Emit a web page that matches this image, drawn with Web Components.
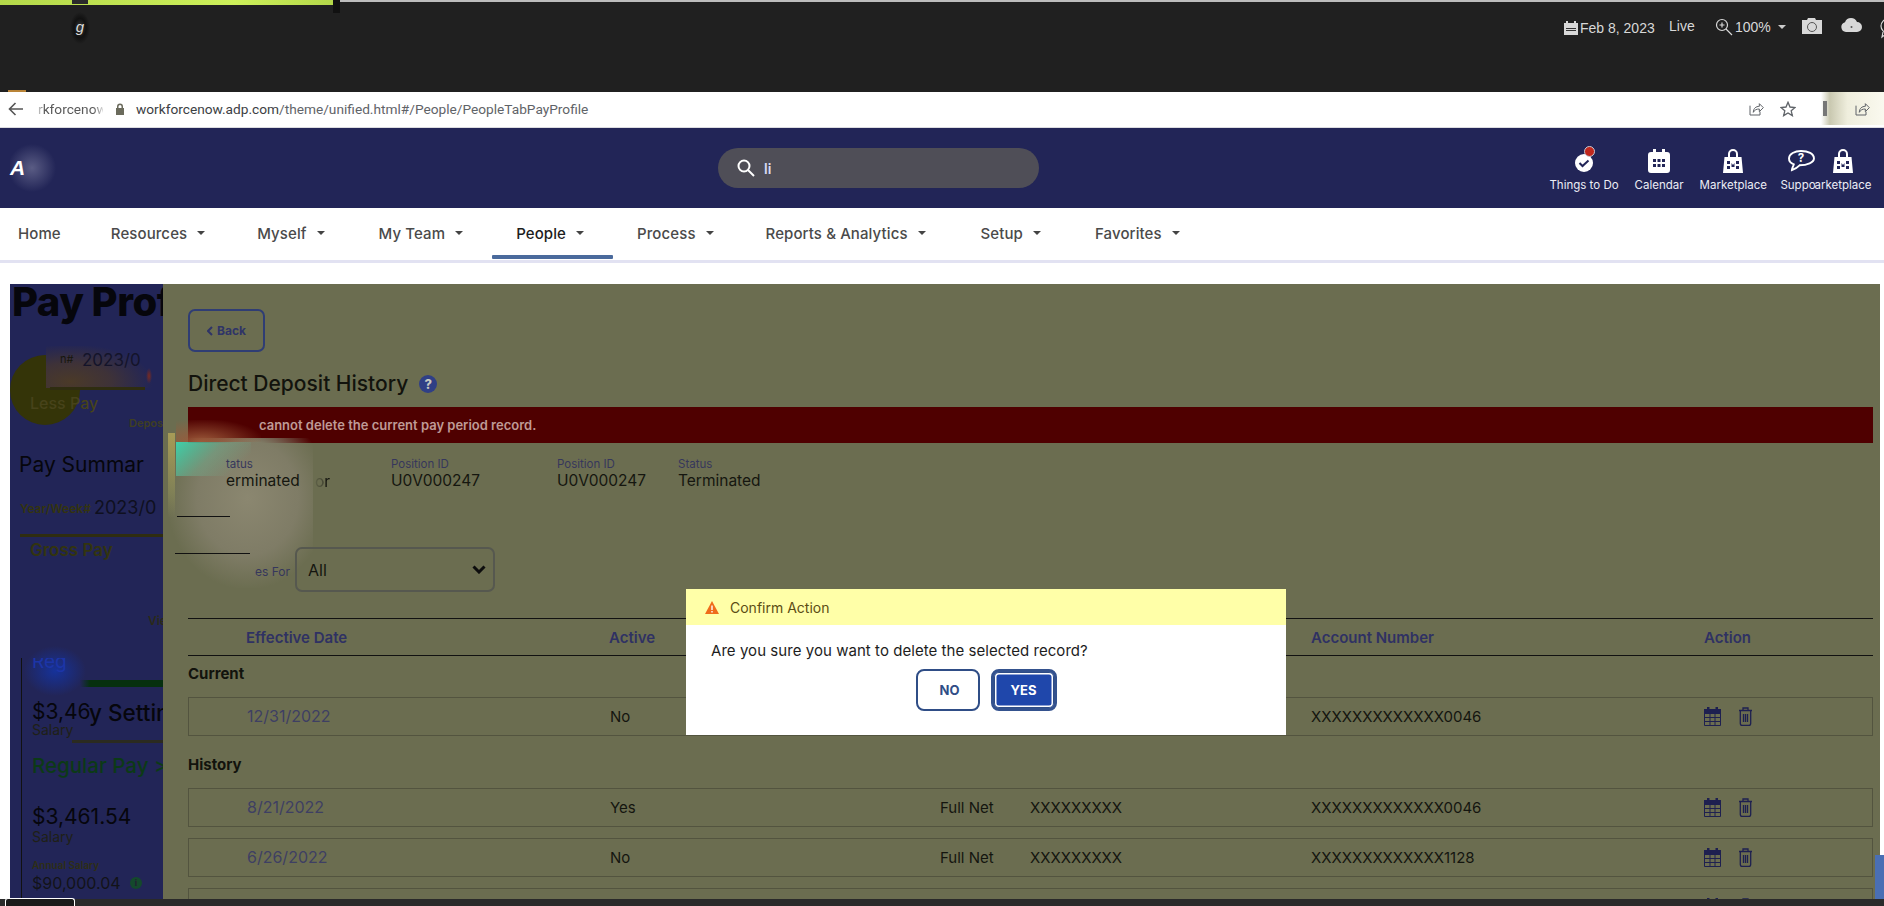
<!DOCTYPE html>
<html>
<head>
<meta charset="utf-8">
<style>
html,body{margin:0;padding:0;background:#fff}
body{width:1884px;height:906px;overflow:hidden;display:flex;flex-direction:column;font-family:Inter,"Liberation Sans",sans-serif}
</style>
</head>
<body>
<top-strip></top-strip>
<address-bar></address-bar>
<app-header></app-header>
<main-nav></main-nav>
<work-area></work-area>
<bottom-strip></bottom-strip>
<confirm-modal></confirm-modal>

<script>
// icono reutilizable, todos los trazos viven aqui
const ICONS = {
  calendar: '<svg viewBox="0 0 22 24" width="100%" height="100%"><path fill="currentColor" fill-rule="evenodd" d="M3 3h2V0h3v3h6V0h3v3h2a3 3 0 0 1 3 3v15a3 3 0 0 1-3 3H3a3 3 0 0 1-3-3V6a3 3 0 0 1 3-3zM5 10v3h3v-3zm4.500 0v3h3v-3zm4.500 0v3h3v-3zM5 15v3h3v-3zm4.500 0v3h3v-3zm4.500 0v3h3v-3z"/></svg>',
  bag: '<svg viewBox="0 0 20 24" width="100%" height="100%"><path fill="currentColor" fill-rule="evenodd" d="M1.500 8H5V5a5 5 0 0 1 10 0v3h3.500L20 24H0zM7 8h6V5a3 3 0 0 0-6 0zM4 12v3h3v-3zm9 0v3h3v-3zM4 17v3h3v-3zm9 0v3h3v-3zM8.500 14l1.500 2 1.500-2v4h-3z"/></svg>',
  share: '<svg viewBox="0 0 24 24" width="100%" height="100%" fill="none" stroke="currentColor" stroke-width="1.500"><path d="M3 7v14h15v-5"/><path d="M8 17c0-6 4-9 9-9V4l6 6-6 6v-4c-4 0-7 1-9 5z"/></svg>'
};

class TopStrip extends HTMLElement {
  constructor(){
    super();
    this.attachShadow({mode:'open'});
    this.shadowRoot.innerHTML = `
    <style>
      :host{display:flex;flex:0 0 92px;height:92px;background:#202020;position:relative;color:#d8d8d8;font:14px "Liberation Sans",sans-serif;overflow:hidden}
      .line{position:absolute;left:0;right:0;top:0;height:2px;background:#bdbdbd}
      .lime{position:absolute;left:0;top:0;width:334px;height:5px;background:linear-gradient(90deg,#b4d84a,#cdf05a 70%,#b4d84a)}
      .cut{position:absolute;left:72px;top:0;width:16px;height:4px;background:#2b2b2b}
      .smudge{position:absolute;left:70px;top:12px;width:20px;height:32px;text-align:center;line-height:30px;color:#ddd;font-size:15px;font-style:italic;background:radial-gradient(closest-side,#3a3a3a,#111 60%,transparent)}
      .tick{position:absolute;left:8px;top:90px;width:18px;height:2px;background:#b98438}
      .notch{position:absolute;left:333px;top:0;width:7px;height:13px;background:#111}
      .tools{margin-left:auto;display:flex;align-items:flex-start;padding:18px 0 0 0;width:320px;box-sizing:border-box;position:relative;white-space:nowrap}
      .date{display:flex;align-items:center;gap:2px;width:105px;margin-top:2px}
      .live{width:46px;margin-top:0}
      .zoom{display:flex;align-items:center;gap:2px;width:87px}
      .caret{width:0;height:0;border:4px solid transparent;border-top-color:#ccc;border-bottom:0;margin-left:5px}
      svg{display:block;flex:none}
      .tools svg.ic{margin-right:19px}
    </style>
    <div class="line"></div><div class="lime"></div><div class="cut"></div><div class="notch"></div>
    <div class="smudge">g</div><div class="tick"></div>
    <div class="tools">
      <div class="date"><svg width="14" height="14" viewBox="0 0 14 14"><path fill="#d8d8d8" d="M0 2h2V0h2v2h6V0h2v2h2v12H0z"/><path fill="#333" d="M2 7h10v1H2zm0 2h10v1H2z"/></svg><span>Feb 8, 2023</span></div>
      <div class="live">Live</div>
      <div class="zoom"><svg width="18" height="18" viewBox="0 0 18 18" fill="none" stroke="#d8d8d8" stroke-width="1.200"><circle cx="7" cy="7" r="5.500"/><path d="M11 11l6 6M7 4.500v5M4.500 7h5"/></svg><span>100%</span><i class="caret"></i></div>
      <svg class="ic" width="20" height="16" viewBox="0 0 20 16"><path fill="#d8d8d8" d="M0 2h5l1-2h7l1 2h6v14H0z"/><circle cx="10" cy="9" r="4.500" fill="none" stroke="#555" stroke-width="1"/></svg>
      <svg class="ic" width="21" height="14" viewBox="0 0 21 14" style="margin-right:18px"><path fill="#d8d8d8" d="M5 14a5 5 0 0 1-1-9.800A6.500 6.500 0 0 1 16 4a5 5 0 0 1 0 10z"/><circle cx="10.500" cy="9" r="1" fill="#555"/></svg>
      <svg width="4" height="22" viewBox="0 0 4 22" fill="none" stroke="#d8d8d8" stroke-width="1.200"><circle cx="8" cy="8" r="7"/><path d="M3 14l-1 5 4-3"/></svg>
    </div>`;
  }
}

class AddressBar extends HTMLElement {
  constructor(){
    super();
    this.attachShadow({mode:'open'});
    this.shadowRoot.innerHTML = `
    <style>
      :host{display:flex;align-items:center;flex:0 0 36px;height:36px;box-sizing:border-box;padding-bottom:2px;background:#fff;border-bottom:1px solid #dcdce0;color:#5f6368;font:13.700px Roboto,sans-serif;position:relative}
      .back{width:15px;height:14px;margin-left:8px;color:#555}
      .tab{width:65px;margin-left:15px;color:#5a5a5a;white-space:nowrap;overflow:hidden;-webkit-mask-image:linear-gradient(90deg,#0004 0,#000 10%,#000 85%,#0003 100%)}
      .lock{margin-left:12px;margin-right:11px}
      .url b{font-weight:400;color:#3c4043}
      .right{margin-left:auto;display:flex;align-items:center;color:#5f6368}
      .s{width:16px;height:16px;display:block}
      .star{margin-left:16px;width:16px;height:16px}
      .tail{display:flex;align-items:center;justify-content:flex-end;width:63px;height:33px;margin-left:25px;background:linear-gradient(90deg,#fff,#c9c8b0 14%,#efeedd 42%,#faf9ef);position:relative;padding-right:14px;box-sizing:border-box}
      .tail i{position:absolute;left:2px;top:9px;width:4px;height:15px;background:#777}
    </style>
    <svg class="back" viewBox="0 0 15 14" fill="none" stroke="currentColor" stroke-width="1.600"><path d="M15 7H1.500M7.500 1L1.500 7l6 6"/></svg>
    <div class="tab">rkforcenow</div>
    <svg class="lock" width="10" height="12" viewBox="0 0 10 12"><path fill="#6b6b5c" d="M1 5h1V3.500a3 3 0 0 1 6 0V5h1v7H1zM3.500 5h3V3.500a1.500 1.500 0 0 0-3 0z"/></svg>
    <span class="url"><b>workforcenow.adp.com</b>/theme/unified.html#/People/PeopleTabPayProfile</span>
    <div class="right">
      <span class="s">${ICONS.share}</span>
      <svg class="star" viewBox="0 0 24 24" fill="none" stroke="currentColor" stroke-width="2"><path d="M12 2l3 7 7.500.700-5.700 5 1.700 7.300L12 18l-6.500 4 1.700-7.300-5.700-5L9 9z"/></svg>
      <div class="tail"><i></i><span class="s">${ICONS.share}</span></div>
    </div>`;
  }
}

class HeadAction extends HTMLElement {
  constructor(){
    super();
    this.attachShadow({mode:'open'});
    this.shadowRoot.innerHTML = `
    <style>
      :host{display:flex;flex-direction:column;align-items:center;gap:5px;color:#fff;font:11.500px Inter,sans-serif;white-space:nowrap}
      .ic{height:25px;display:flex;align-items:flex-end;justify-content:center}
      span{color:#ecedf5}
    </style>
    <div class="ic"><slot name="icon"></slot></div><span><slot></slot></span>`;
  }
}

class AppHeader extends HTMLElement {
  constructor(){
    super();
    this.attachShadow({mode:'open'});
    this.shadowRoot.innerHTML = `
    <style>
      :host{display:flex;align-items:center;flex:0 0 80px;height:80px;background:#222557;position:relative}
      .logo{width:60px;height:60px;margin-left:10px;display:flex;align-items:center;color:#fff;font:italic 700 21px "Liberation Sans",sans-serif;background:radial-gradient(circle at 22px 30px,#5a5c84 0,#222557 24px)}
      .search{position:absolute;left:718px;top:20px;width:321px;height:40px;border-radius:20px;background:#4f4e57;display:flex;align-items:center;color:#d9d9f5;font:600 14px Inter,sans-serif}
      .search svg{margin-left:19px;margin-right:9px}
      .acts{margin-left:auto;display:flex;align-items:flex-start;margin-right:11px;padding-top:4px}
      .a1,.a2,.a3{margin-right:16px}
      .stack{display:flex;justify-content:space-between;width:90px}
      svg{display:block}
      .dot{position:absolute;width:9px;height:9px;border-radius:50%;background:#c0271d;left:9px;top:-8px;border:1px solid #c9c9d4}
      .check{position:relative;margin-bottom:1px}
      .sup{width:30px}
      .arkt{width:60px}
    </style>
    <div class="logo">A</div>
    <div class="search">
      <svg width="18" height="18" viewBox="0 0 18 18" fill="none" stroke="#fff" stroke-width="2"><circle cx="7" cy="7" r="5.500"/><path d="M11 11l6 6"/></svg>
      <span>li</span>
    </div>
    <div class="acts">
      <head-action class="a1"><div slot="icon" class="check"><svg width="18" height="18" viewBox="0 0 18 18"><circle cx="9" cy="9" r="9" fill="#fff"/><path d="M4.500 9l3 3L13.500 6.500" fill="none" stroke="#222557" stroke-width="2"/></svg><i class="dot"></i></div>Things to Do</head-action>
      <head-action class="a2"><div slot="icon" style="width:22px;height:24px;color:#fff">${ICONS.calendar}</div>Calendar</head-action>
      <head-action class="a3"><div slot="icon" style="width:20px;height:24px;color:#fff">${ICONS.bag}</div>Marketplace</head-action>
      <div class="stack">
        <head-action class="sup"><svg slot="icon" width="28" height="24" viewBox="0 0 29 25" style="margin-left:6px"><path fill="none" stroke="#fff" stroke-width="2" d="M14.500 2C8 2 2 5 2 10c0 3 2 5 5 6-.5 2-2 4-2 6 3-1 6-3 8-5 8 0 15-3 15-7 0-5-6-8-13.500-8z"/><text x="14.500" y="14" text-anchor="middle" fill="#fff" font-size="12" font-weight="700" font-family="Inter">?</text></svg>Suppo</head-action>
        <head-action class="arkt"><div slot="icon" style="width:20px;height:24px;color:#fff">${ICONS.bag}</div>arketplace</head-action>
      </div>
    </div>`;
  }
}

class NavItem extends HTMLElement {
  constructor(){
    super();
    this.attachShadow({mode:'open'});
    this.shadowRoot.innerHTML = `
    <style>
      :host{display:flex;align-items:center;height:52px;box-sizing:border-box;padding-bottom:2px;color:#4a4a4a;font:500 15px Inter,sans-serif;letter-spacing:.1px;position:relative;white-space:nowrap}
      :host([active]){color:#1d1d1d}
      :host([active])::after{content:"";position:absolute;left:-24px;bottom:1px;height:4px;background:#4a6a9c;border-radius:1px;width:121px}
      i{width:0;height:0;border:4px solid transparent;border-top-color:#444;border-bottom:0;margin-left:10px;display:none}
      :host([menu]) i{display:block}
    </style>
    <slot></slot><i></i>`;
  }
}

class MainNav extends HTMLElement {
  constructor(){
    super();
    this.attachShadow({mode:'open'});
    this.shadowRoot.innerHTML = `
    <style>
      :host{display:flex;flex:0 0 52px;height:52px;background:#fff;border-bottom:3px solid #e2e2f2;padding-left:18px;margin-bottom:21px}
    </style>
    <nav-item>Home</nav-item>
    <nav-item menu style="margin-left:50px">Resources</nav-item>
    <nav-item menu style="margin-left:52px">Myself</nav-item>
    <nav-item menu style="margin-left:54px">My Team</nav-item>
    <nav-item menu active style="margin-left:53px">People</nav-item>
    <nav-item menu style="margin-left:53px">Process</nav-item>
    <nav-item menu style="margin-left:52px">Reports &amp; Analytics</nav-item>
    <nav-item menu style="margin-left:55px">Setup</nav-item>
    <nav-item menu style="margin-left:54px">Favorites</nav-item>`;
  }
}

class SidePanel extends HTMLElement {
  constructor(){
    super();
    this.attachShadow({mode:'open'});
    this.shadowRoot.innerHTML = `
    <style>
      :host{display:block;flex:0 0 153px;width:153px;background:#222557;position:relative;overflow:hidden;color:#06060c;font-family:Inter,sans-serif}
      /* en la captura estas piezas se pisan unas a otras, por eso van sueltas */
      .t{position:absolute;white-space:nowrap}
      .bar{position:absolute}
    </style>
    <div class="t" style="left:2px;top:-7px;font-size:40px;font-weight:800;letter-spacing:-.5px">Pay Prof</div>
    <div class="bar" style="left:0;top:71px;width:70px;height:70px;border-radius:50%;background:#343408"></div>
    <div class="bar" style="left:36px;top:62px;width:110px;height:42px;background:radial-gradient(ellipse 75% 90% at 22% 85%,#4b3a28 0,#3e3238 50%,#222557 100%)"></div>
    <div class="t" style="left:50px;top:68px;font-size:11px;color:#17160c">n#</div>
    <div class="t" style="left:72px;top:66px;font-size:17px;color:#14142a">2023/0</div>
    <div class="bar" style="left:136px;top:84px;width:6px;height:16px;background:radial-gradient(closest-side,#7a2a20,transparent)"></div>
    <div class="bar" style="left:40px;top:103px;width:95px;height:3px;background:#2f2d10"></div>
    <div class="t" style="left:20px;top:109px;font-size:16px;color:#47431a;font-weight:500">Less Pay</div>
    <div class="t" style="left:119px;top:132px;font-size:11px;color:#3f3f22;font-weight:600">Depos</div>
    <div class="t" style="left:9px;top:168px;font-size:21px">Pay Summar</div>
    <div class="t" style="left:10px;top:217px;font-size:12px;color:#34340f;font-weight:600">Year/Week#</div>
    <div class="t" style="left:84px;top:213px;font-size:18px;color:#0f1020">2023/0</div>
    <div class="bar" style="left:10px;top:250px;width:143px;height:3px;background:#2f2d10"></div>
    <div class="t" style="left:20px;top:256px;font-size:17px;font-weight:600;color:#33340f">Gross Pay</div>
    <div class="t" style="left:138px;top:329px;font-size:12px;color:#2a2a18;font-weight:600">Vie</div>
    <div class="bar" style="left:11px;top:374px;width:1px;height:240px;background:#111"></div>
    <div class="bar" style="left:14px;top:362px;width:62px;height:50px;background:radial-gradient(closest-side,#16329a,transparent)"></div>
    <div class="t" style="left:22px;top:366px;font-size:19px;color:#1c35a8;clip-path:inset(8px 0 0 0)">Reg</div>
    <div class="bar" style="left:70px;top:396px;width:83px;height:7px;background:linear-gradient(90deg,#222557,#06300f 12%)"></div>
    <div class="t" style="left:22px;top:415px;font-size:21px">$3,46</div>
    <div class="t" style="left:79px;top:415px;font-size:22.500px;font-weight:500">y Settin</div>
    <div class="t" style="left:22px;top:437px;font-size:14px;color:#1f2016">Salary</div>
    <div class="bar" style="left:62px;top:456px;width:91px;height:3px;background:#2b2b20"></div>
    <div class="t" style="left:22px;top:469px;font-size:20.500px;color:#0c3a16;font-weight:500">Regular Pay &gt;</div>
    <div class="t" style="left:22px;top:520px;font-size:21px">$3,461.54</div>
    <div class="t" style="left:22px;top:544px;font-size:14px;color:#1f2016">Salary</div>
    <div class="t" style="left:22px;top:575px;font-size:10px;color:#2e2e14;font-weight:600">Annual Salary</div>
    <div class="t" style="left:22px;top:589px;font-size:16px;color:#121318">$90,000.04</div>
    <div class="t" style="left:120px;top:593px;width:12px;height:12px;border-radius:50%;background:#14492c;color:#223;font:700 10px/12px 'Liberation Serif',serif;text-align:center">i</div>`;
  }
}

class MiniStat extends HTMLElement {
  constructor(){
    super();
    this.attachShadow({mode:'open'});
    this.shadowRoot.innerHTML = `
    <style>
      :host{display:flex;flex-direction:column;font-family:Inter,sans-serif;position:relative;z-index:2}
      .l{font-size:11.500px;color:#36375c;line-height:14px}
      .v{font-size:15.500px;color:#15160f;line-height:18px;margin-top:1px}
    </style>
    <div class="l"><slot name="label"></slot></div><div class="v"><slot></slot></div>`;
  }
}

class DepositRow extends HTMLElement {
  constructor(){
    super();
    this.attachShadow({mode:'open'});
    this.shadowRoot.innerHTML = `
    <style>
      :host{display:grid;grid-template-columns:58px 363px 330px 90px 281px 393px 1fr;align-items:center;height:39px;box-sizing:border-box;border:1px solid #53543f;margin-bottom:11px;font:15px Inter,sans-serif;color:#14150f}
      .d{color:#3e3f63;font-size:16px;margin-top:-1px}
      .ic{display:flex;gap:17px}
      svg{display:block}
    </style>
    <span></span><span class="d"><slot name="date"></slot></span><span><slot name="active"></slot></span><span><slot name="type"></slot></span><span><slot name="rout"></slot></span><span><slot name="acct"></slot></span>
    <span class="ic">
      <svg width="17" height="19" viewBox="0 0 17 19"><path fill="#1e2050" d="M0 2h3V0h2.500v2h6V0H14v2h3v5H0z"/><path fill="none" stroke="#1e2050" d="M.500 6.500h16v12H.500zM.500 10.500h16M.500 14.500h16M6 7v11M11 7v11"/></svg>
      <svg width="15" height="19" viewBox="0 0 15 19" fill="none" stroke="#1e2050" stroke-width="1.300"><path d="M1 3.500h13M5 3.500V1h5v2.500M2.300 3.500V16.500a2 2 0 0 0 2 2h6.400a2 2 0 0 0 2-2V3.500M5.500 7v8M7.500 7v8M9.500 7v8"/></svg>
    </span>`;
  }
}

class ConfirmModal extends HTMLElement {
  constructor(){
    super();
    this.attachShadow({mode:'open'});
    this.shadowRoot.innerHTML = `
    <style>
      :host{position:absolute;left:686px;top:589px;width:600px;height:146px;background:#fff;display:flex;flex-direction:column;font-family:Inter,sans-serif;z-index:5}
      .h{height:36px;background:#ffffa8;display:flex;align-items:center;gap:11px;padding-left:19px;font-size:14px;color:#5c4d14}
      .q{font-size:15px;letter-spacing:.05px;color:#1d1d1d;padding:16px 0 0 25px;line-height:20px}
      .btns{display:flex;justify-content:center;gap:11px;margin-top:8px}
      button{font:700 13px Inter,sans-serif;width:64px;height:42px;box-sizing:border-box;border-radius:8px;border:2px solid #2f4d86;background:#fff;color:#2f4d86;padding:0 0 0 4px}
      button.y{width:66px;padding:0;background:#1f47ab;color:#fff;border:3px solid #34528e;box-shadow:inset 0 0 0 1px #2f4d86,inset 0 0 0 2.500px #fff}
      svg{display:block}
    </style>
    <div class="h"><svg width="14" height="13" viewBox="0 0 14 13"><path fill="#ef6c1a" d="M7 0l7 13H0z"/><path fill="#fff" d="M6.300 4.500h1.400v4.500H6.300zM6.300 10h1.400v1.500H6.300z"/></svg>Confirm Action</div>
    <div class="q">Are you sure you want to delete the selected record?</div>
    <div class="btns"><button>NO</button><button class="y">YES</button></div>`;
  }
}

class HistoryPanel extends HTMLElement {
  constructor(){
    super();
    this.attachShadow({mode:'open'});
    this.shadowRoot.innerHTML = `
    <style>
      :host{display:block;flex:1;background:#6b6d50;position:relative;overflow:hidden;font-family:Inter,sans-serif;padding:25px 7px 0 25px;box-sizing:border-box;color:#14150f}
      .back{display:flex;align-items:center;justify-content:center;gap:4px;box-sizing:border-box;width:77px;height:43px;border:2px solid #2f3d74;border-radius:7px;color:#2f3467;font-size:12px;font-weight:700}
      h1{font-size:21px;font-weight:500;margin:16px 0 0;display:flex;align-items:center;gap:11px;line-height:32px;color:#12130d}
      .q{width:18px;height:18px;border-radius:50%;background:#2f3f86;color:#c6c8c0;font-size:13px;font-weight:800;display:flex;align-items:center;justify-content:center;margin-top:-1px}
      .err{background:#4f0000;color:#bf9a96;font-size:13px;font-weight:600;height:36px;display:flex;align-items:center;padding-left:71px;margin-top:7px}
      .stats{display:flex;padding:14px 0 0 38px;height:74px;box-sizing:border-box}
      .sel-row{display:flex;align-items:center;margin-top:30px;height:45px;position:relative;z-index:2}
      .sel-lbl{width:102px;text-align:right;font-size:12px;color:#36375c;margin-right:5px;padding-top:3px}
      .sel{width:200px;height:45px;box-sizing:border-box;border:2px solid #56584f;border-radius:7px;display:flex;align-items:center;padding-left:11px;justify-content:space-between;font-size:16px}
      .sel svg{margin-right:7px}
      .thead{display:grid;grid-template-columns:58px 363px 331px 90px 281px 393px 1fr;align-items:center;height:38px;box-sizing:border-box;border-top:1px solid #111;border-bottom:1px solid #111;margin-top:26px;font-size:15px;font-weight:600;color:#2f3163}
      .sec{font-size:15px;font-weight:700;line-height:20px;color:#12130d;margin:8px 0 13px}
      .sec2{margin-top:19px;margin-bottom:13px}
      .patch{position:absolute;left:5px;top:154px;width:145px;height:150px;background:radial-gradient(ellipse at 55% 40%,#8b8770 0,#7f7c66 45%,rgba(107,109,80,0) 72%)}
      .teal{position:absolute;left:8px;top:4px;width:75px;height:34px;background:linear-gradient(135deg,#3fd0aa,rgba(111,174,142,.5) 45%,rgba(107,109,80,0) 80%)}
      .rust{position:absolute;left:8px;top:-18px;width:85px;height:22px;background:radial-gradient(ellipse at 30% 100%,#9c5a3a,rgba(79,0,0,0) 75%)}
      .edge{position:absolute;left:0;top:-5px;width:7px;height:85px;opacity:.65;background:linear-gradient(#c7b45a,#8a8a58 70%,rgba(107,109,80,0))}
      .ln{position:absolute;height:1px;background:#111}
      .or{position:absolute;left:152px;top:188px;font-size:15.500px;z-index:2;-webkit-mask-image:linear-gradient(90deg,#0002,#0006 50%,#000 65%)}
    </style>
    <div class="back"><svg width="6" height="10" viewBox="0 0 6 10" fill="none" stroke="currentColor" stroke-width="2"><path d="M5 1L1 5l4 4"/></svg>Back</div>
    <h1>Direct Deposit History <span class="q">?</span></h1>
    <div class="err">cannot delete the current pay period record.</div>
    <div class="stats">
      <mini-stat style="width:165px"><span slot="label">tatus</span>erminated</mini-stat>
      <mini-stat style="width:166px"><span slot="label">Position ID</span>U0V000247</mini-stat>
      <mini-stat style="width:121px"><span slot="label">Position ID</span>U0V000247</mini-stat>
      <mini-stat><span slot="label">Status</span>Terminated</mini-stat>
    </div>
    <div class="sel-row">
      <div class="sel-lbl">es For</div>
      <div class="sel">All<svg width="14" height="9" viewBox="0 0 14 9" fill="none" stroke="#0d0d0d" stroke-width="3"><path d="M1.500 1.500L7 7l5.500-5.500"/></svg></div>
    </div>
    <div class="thead"><span></span><span>Effective Date</span><span>Active</span><span></span><span></span><span>Account Number</span><span>Action</span></div>
    <div class="sec">Current</div>
    <deposit-row><span slot="date">12/31/2022</span><span slot="active">No</span><span slot="acct">XXXXXXXXXXXXX0046</span></deposit-row>
    <div class="sec sec2">History</div>
    <deposit-row><span slot="date">8/21/2022</span><span slot="active">Yes</span><span slot="type">Full Net</span><span slot="rout">XXXXXXXXX</span><span slot="acct">XXXXXXXXXXXXX0046</span></deposit-row>
    <deposit-row><span slot="date">6/26/2022</span><span slot="active">No</span><span slot="type">Full Net</span><span slot="rout">XXXXXXXXX</span><span slot="acct">XXXXXXXXXXXXX1128</span></deposit-row>
    <deposit-row></deposit-row>
    <div class="or">or</div>
    <div class="patch"><div class="edge"></div><div class="rust"></div><div class="teal"></div><div class="ln" style="left:9px;top:78px;width:53px"></div><div class="ln" style="left:7px;top:115px;width:75px"></div></div>`;
  }
}

class WorkArea extends HTMLElement {
  constructor(){
    super();
    this.attachShadow({mode:'open'});
    this.shadowRoot.innerHTML = `
    <style>
      :host{display:flex;flex:1;min-height:0;padding:0 4px 0 10px;background:#fff;position:relative}
      .blue{position:absolute;right:0;bottom:0;width:9px;height:44px;background:#4a6fb4}
    </style>
    <side-panel></side-panel><history-panel></history-panel><div class="blue"></div>`;
  }
}

class BottomStrip extends HTMLElement {
  constructor(){
    super();
    this.attachShadow({mode:'open'});
    this.shadowRoot.innerHTML = `
    <style>
      :host{display:block;flex:0 0 7px;height:7px;background:#2a2a2a;position:relative}
      div{position:absolute;left:5px;top:-1px;width:70px;height:8px;border:1px solid #fff;border-bottom:0;border-radius:3px 3px 0 0;box-sizing:border-box;background:#1a1a1a}
    </style><div></div>`;
  }
}

customElements.define('head-action', HeadAction);
customElements.define('nav-item', NavItem);
customElements.define('mini-stat', MiniStat);
customElements.define('deposit-row', DepositRow);
customElements.define('top-strip', TopStrip);
customElements.define('address-bar', AddressBar);
customElements.define('app-header', AppHeader);
customElements.define('main-nav', MainNav);
customElements.define('side-panel', SidePanel);
customElements.define('confirm-modal', ConfirmModal);
customElements.define('history-panel', HistoryPanel);
customElements.define('work-area', WorkArea);
customElements.define('bottom-strip', BottomStrip);
</script>
</body>
</html>
